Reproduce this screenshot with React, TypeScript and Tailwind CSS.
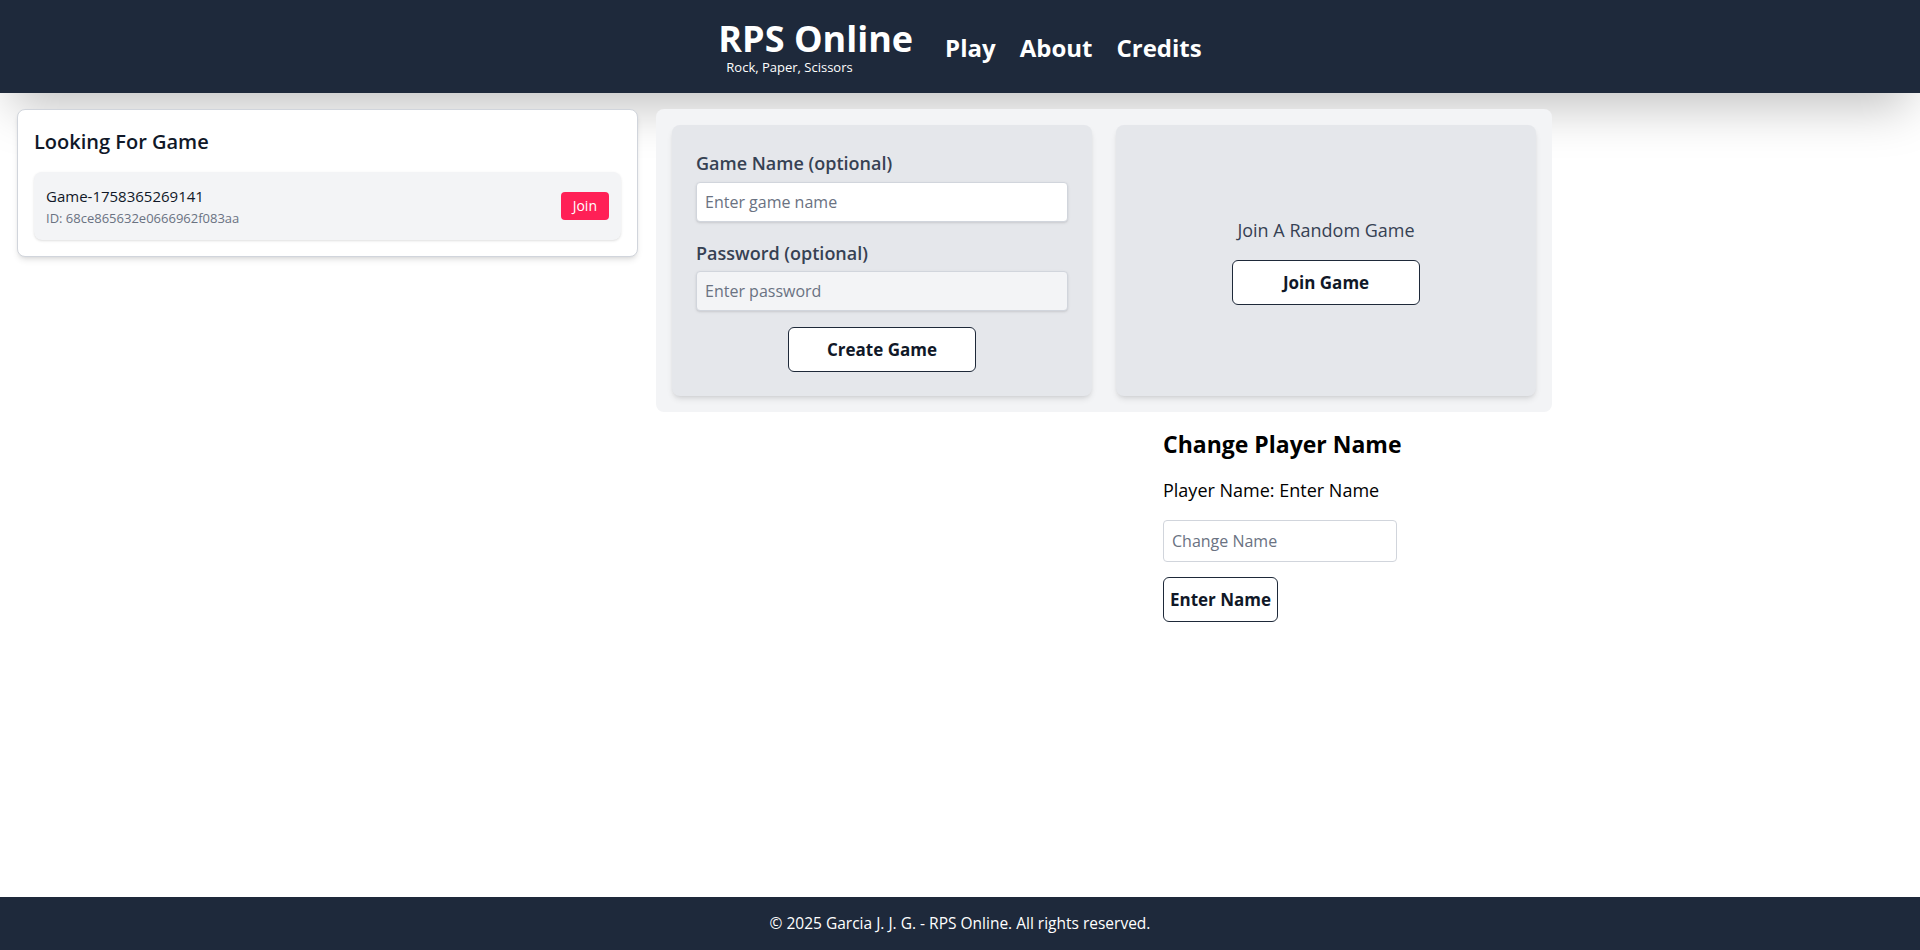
import React from "react";

const font = { fontFamily: '"Open Sans", "Noto Sans", sans-serif' };

function LookingForGame() {
  const games = [{ name: "Game-1758365269141", id: "68ce865632e0666962f083aa" }];
  return (
    <div className="ml-[1px] w-[621px] shrink-0 rounded-lg border border-gray-300 bg-white px-4 pb-4 pt-[18px] shadow-md">
      <h2 className="mb-4 text-xl font-semibold text-gray-900">Looking For Game</h2>
      {games.map((g) => (
        <div key={g.id} className="flex items-center justify-between rounded-lg bg-gray-100 p-3 shadow-sm">
          <div>
            <p className="text-[15px] leading-6 font-medium text-gray-900">{g.name}</p>
            <p className="text-[13px] leading-5 text-gray-500">ID: {g.id}</p>
          </div>
          <button className="rounded bg-rose-500 px-3 py-1 text-sm text-white">Join</button>
        </div>
      ))}
    </div>
  );
}

function CreateGame() {
  return (
    <div className="rounded-lg bg-gray-200 p-6 shadow-md">
      <label className="mb-[5px] block text-lg font-semibold text-gray-700">Game Name (optional)</label>
      <input
        placeholder="Enter game name"
        className="mb-[17px] block h-10 w-full rounded border border-gray-300 bg-white px-2 text-base shadow-sm placeholder:text-gray-500"
      />
      <label className="mb-1 block text-lg font-semibold text-gray-700">Password (optional)</label>
      <input
        type="password"
        placeholder="Enter password"
        className="mb-4 block h-10 w-full rounded border border-gray-300 bg-gray-100 px-2 text-base shadow-sm placeholder:text-gray-500"
      />
      <div className="flex justify-center">
        <button className="h-[45px] w-[188px] rounded-md border border-gray-800 bg-white text-[17px] font-bold text-gray-900">
          Create Game
        </button>
      </div>
    </div>
  );
}

function RandomGame() {
  return (
    <div className="flex flex-col items-center justify-center rounded-lg bg-gray-200 p-6 shadow-md">
      <p className="mb-4 text-lg text-gray-700">Join A Random Game</p>
      <button className="h-[45px] w-[188px] rounded-md border border-gray-800 bg-white text-[17px] font-bold text-gray-900">
        Join Game
      </button>
    </div>
  );
}

function ChangeName() {
  return (
    <div className="ml-[507px] mt-4">
      <h2 className="text-[23px] leading-8 font-bold text-black">Change Player Name</h2>
      <p className="mt-4 text-lg text-black">Player Name: Enter Name</p>
      <input
        placeholder="Change Name"
        className="mt-4 block w-[234px] rounded border border-gray-300 bg-white p-2 text-base placeholder:text-gray-500"
      />
      <button className="mt-[15px] h-[45px] rounded-md border border-gray-800 bg-white px-1.5 text-[17px] font-bold text-gray-900">
        Enter Name
      </button>
    </div>
  );
}

export default function App() {
  return (
    <div className="flex min-h-screen flex-col bg-white" style={font}>
      <header className="flex h-[93px] items-center justify-center gap-8 bg-[#1e293b] shadow-2xl">
        <div className="flex flex-col pt-[2px]">
          <h1 className="text-4xl leading-9 font-bold text-white">RPS Online</h1>
          <span className="mt-[2px] pl-2 text-[13px] leading-4 text-white">Rock, Paper, Scissors</span>
        </div>
        <nav className="flex gap-6 pt-[2px] text-2xl font-bold text-white">
          <a>Play</a>
          <a>About</a>
          <a>Credits</a>
        </nav>
      </header>

      <main className="flex flex-1 items-start gap-[18px] px-4 pt-4">
        <LookingForGame />
        <div className="w-[896px] shrink-0">
          <div className="grid grid-cols-2 gap-6 rounded-lg bg-gray-100 p-4">
            <CreateGame />
            <RandomGame />
          </div>
          <ChangeName />
        </div>
      </main>

      <footer className="flex h-[53px] items-center justify-center bg-[#1e293b] text-[15.5px] text-white">
        © 2025 Garcia J. J. G. - RPS Online. All rights reserved.
      </footer>
    </div>
  );
}
